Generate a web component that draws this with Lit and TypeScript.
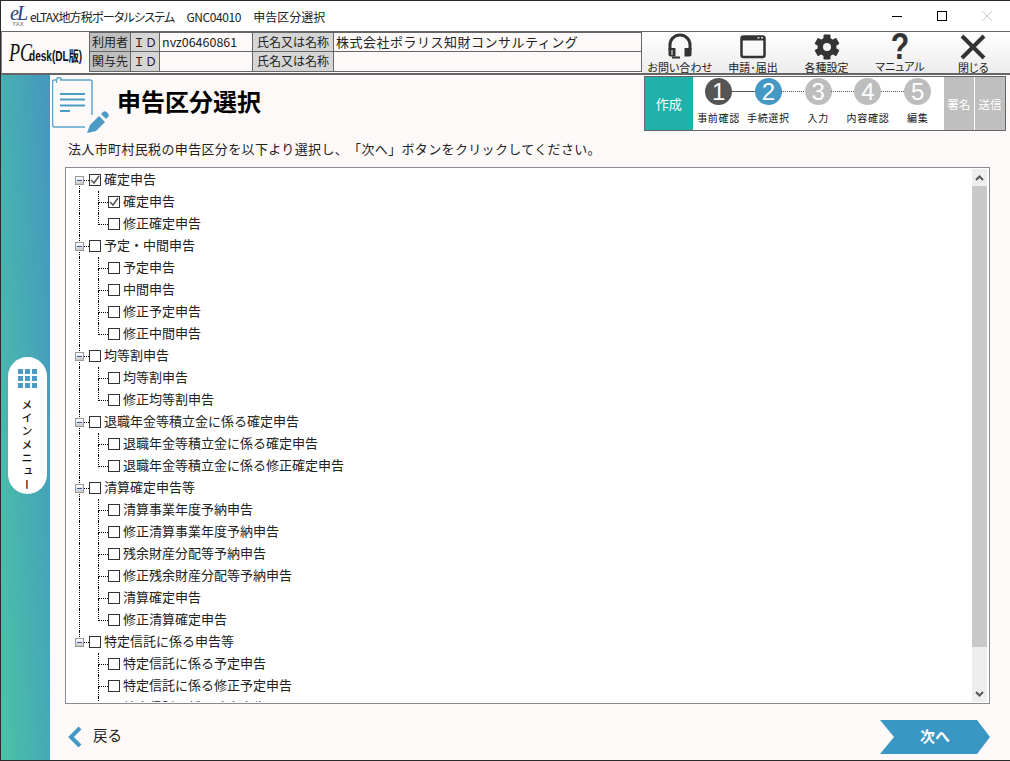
import { LitElement, css, html, svg } from 'lit';
import { customElement } from 'lit/decorators.js';

type Group = { label: string; checked?: boolean; children: { label: string; checked?: boolean }[] };

const groups: Group[] = [
  { label: '確定申告', checked: true, children: [{ label: '確定申告', checked: true }, { label: '修正確定申告' }] },
  { label: '予定・中間申告', children: [{ label: '予定申告' }, { label: '中間申告' }, { label: '修正予定申告' }, { label: '修正中間申告' }] },
  { label: '均等割申告', children: [{ label: '均等割申告' }, { label: '修正均等割申告' }] },
  { label: '退職年金等積立金に係る確定申告', children: [{ label: '退職年金等積立金に係る確定申告' }, { label: '退職年金等積立金に係る修正確定申告' }] },
  {
    label: '清算確定申告等',
    children: [
      { label: '清算事業年度予納申告' },
      { label: '修正清算事業年度予納申告' },
      { label: '残余財産分配等予納申告' },
      { label: '修正残余財産分配等予納申告' },
      { label: '清算確定申告' },
      { label: '修正清算確定申告' },
    ],
  },
  { label: '特定信託に係る申告等', children: [{ label: '特定信託に係る予定申告' }, { label: '特定信託に係る修正予定申告' }, { label: '特定信託に係る確定申告' }] },
];

const steps = [
  { n: '1', label: '事前確認', state: 'done' },
  { n: '2', label: '手続選択', state: 'current' },
  { n: '3', label: '入力', state: 'todo' },
  { n: '4', label: '内容確認', state: 'todo' },
  { n: '5', label: '編集', state: 'todo' },
];

const headset = svg`<svg width="28" height="28" viewBox="0 0 28 28"><path d="M4 17V12a10 10 0 0 1 20 0v5" fill="none" stroke="#333" stroke-width="3"/><path d="M2.500 15h7v8.500h-5a2 2 0 0 1-2-2zM25.500 15h-7v8.500h5a2 2 0 0 0 2-2z" fill="#333"/><path d="M6 24.500h8" stroke="#333" stroke-width="2" fill="none"/><path d="M6 17v5" stroke="#fdf9f8" stroke-width="1" fill="none"/></svg>`;
const windowIcon = svg`<svg width="28" height="28" viewBox="0 0 28 28"><rect x="2.500" y="3.500" width="23" height="20.500" rx="2" fill="none" stroke="#333" stroke-width="2.500"/><path d="M2 3h24v4.500H2z" fill="#333"/><path d="M18.500 4h2v1.500h-2zM22 4h2v1.500h-2z" fill="#ddd"/></svg>`;
const gear = svg`<svg width="28" height="28" viewBox="0 0 28 28"><g fill="#333" transform="translate(14 14)">
  <rect x="-3.500" y="-12.500" width="7" height="25" rx="1"/>
  <rect x="-3.500" y="-12.500" width="7" height="25" rx="1" transform="rotate(60)"/>
  <rect x="-3.500" y="-12.500" width="7" height="25" rx="1" transform="rotate(120)"/>
  <circle r="9.500"/></g><circle cx="14" cy="14" r="4" fill="#f4f4f4"/></svg>`;
const closeIcon = svg`<svg width="28" height="28" viewBox="0 0 28 28"><path d="M3 3l22 22M25 3L3 25" stroke="#333" stroke-width="4" fill="none"/></svg>`;

@customElement('app-root')
export class AppRoot extends LitElement {
  static styles = css`
    :host {
      display: block;
      width: 1010px;
      height: 761px;
      font-family: 'Noto Sans CJK JP', 'Noto Sans', sans-serif;
      color: #222;
      text-spacing-trim: space-all;
    }
    .window {
      box-sizing: border-box;
      width: 1010px;
      height: 761px;
      display: flex;
      flex-direction: column;
      border: 1px solid #2a2a2a;
      border-right: none;
      background: #fdf9f8;
      overflow: hidden;
    }

    /* title bar */
    .titlebar {
      height: 30px;
      flex: none;
      display: flex;
      align-items: center;
      background: #fff;
      font-size: 12px;
    }
    .applogo {
      width: 20px;
      margin-left: 7px;
      margin-right: 2px;
      height: 22px;
      display: flex;
      flex-direction: column;
      align-items: center;
      font-family: 'Liberation Serif', serif;
      font-style: italic;
      font-size: 20px;
      letter-spacing: -2px;
      line-height: 16px;
      color: #25407e;
    }
    .applogo small {
      font-size: 6px;
      letter-spacing: 0;
      line-height: 6px;
      font-style: normal;
      font-weight: bold;
      font-family: 'Liberation Sans', sans-serif;
      color: #999;
    }
    .apptitle {
      white-space: pre;
      flex: 1;
      display: flex;
      gap: 12px;
    }
    .apptitle span:first-child {
      font-feature-settings: 'palt';
      letter-spacing: -0.800px;
    }
    .apptitle span:nth-child(2) {
      letter-spacing: -0.400px;
    }
    .winbtn {
      width: 45px;
      height: 30px;
      display: flex;
      align-items: center;
      justify-content: center;
    }
    .winbtn:last-child {
      margin-right: 1px;
    }

    /* header */
    .header {
      height: 41px;
      flex: none;
      display: flex;
      background: #fdf9f8;
      border-top: 1px solid #666;
      border-bottom: 2px solid #666;
      border-left: 1px solid #888;
    }
    .pclogo {
      width: 87px;
      flex: none;
      display: flex;
      align-items: center;
      padding-left: 7px;
      box-sizing: border-box;
      color: #111;
    }
    .pclogo .pc {
      font-family: 'Liberation Serif', serif;
      font-style: italic;
      font-size: 25px;
      transform: scaleX(0.72);
      transform-origin: left;
      width: 20px;
      flex: none;
    }
    .pclogo .desk {
      font-family: 'Liberation Sans', 'Noto Sans CJK JP', sans-serif;
      font-weight: bold;
      font-size: 14px;
      white-space: nowrap;
      transform: scaleX(0.72);
      transform-origin: left;
      margin-top: 4px;
    }
    .userinfo {
      width: 553px;
      height: 40px;
      flex: none;
      display: grid;
      grid-template-columns: 41px 29px 93px 81px 1fr;
      grid-template-rows: 1fr 1fr;
      box-sizing: border-box;
      border: 1px solid #666;
      font-size: 12px;
      line-height: 18px;
    }
    .userinfo > div {
      border-right: 1px solid #666;
      border-bottom: 1px solid #666;
      padding: 0 2px;
      white-space: nowrap;
      overflow: hidden;
    }
    .userinfo > div:nth-child(5n) {
      border-right: none;
    }
    .userinfo > div:nth-child(n + 6) {
      border-bottom: none;
    }
    .userinfo .dark {
      background: #bfbfbf;
      text-align: center;
    }
    .userinfo .mid {
      background: #d6d6d6;
      text-align: center;
    }
    .userinfo .uid {
      font-size: 12.500px;
    }
    .userinfo .org {
      font-size: 13px;
      letter-spacing: 0.500px;
    }
    .tools {
      flex: 1;
      display: flex;
      padding-left: 1px;
      background: linear-gradient(#fff, #ececec);
    }
    .tool {
      flex: 1;
      display: flex;
      flex-direction: column;
      align-items: center;
      font-size: 11px;
      line-height: 13px;
      color: #222;
      font-feature-settings: 'palt';
    }
    .tool .ic {
      height: 28px;
      margin-bottom: 1px;
      display: flex;
      align-items: center;
      justify-content: center;
      margin-top: 1px;
    }
    .tool .q {
      font-family: 'Liberation Sans', sans-serif;
      font-weight: bold;
      font-size: 36px;
      line-height: 26px;
      color: #333;
      transform: scaleX(0.84);
    }
    .tool .lbl {
      margin-top: -1px;
    }

    /* body */
    .body {
      flex: 1;
      min-height: 0;
      display: flex;
    }
    .band {
      width: 49px;
      flex: none;
      display: flex;
      align-items: center;
      justify-content: center;
      background: linear-gradient(87deg, #49c3a6, #4596c0);
    }
    .menu {
      box-sizing: border-box;
      width: 39px;
      height: 137px;
      margin-left: 3px;
      margin-top: 15px;
      border-radius: 20px;
      background: #fff;
      display: flex;
      flex-direction: column;
      align-items: center;
      padding-top: 12px;
    }
    .dots {
      display: grid;
      grid-template-columns: repeat(3, 5px);
      grid-auto-rows: 5px;
      gap: 2px;
    }
    .dots i {
      background: #4a9cc4;
    }
    .menu span {
      margin-top: 11px;
      writing-mode: vertical-rl;
      font-size: 11px;
      letter-spacing: 2.400px;
      font-weight: 500;
      color: #111;
    }
    .main {
      flex: 1;
      min-width: 0;
      display: flex;
      flex-direction: column;
    }
    .head {
      height: 59px;
      flex: none;
      display: flex;
    }
    .pageicon {
      margin: 2px 0 0 2px;
      width: 60px;
      height: 57px;
      flex: none;
    }
    .head h1 {
      margin: 8px 0 0 5px;
      font-size: 24px;
      line-height: 36px;
      font-weight: 700;
      color: #000;
      flex: 1;
    }
    .stepper {
      box-sizing: border-box;
      margin: 1px 4px 0 0;
      width: 362px;
      height: 55px;
      flex: none;
      display: flex;
      background: #fff;
      border: 1px solid #666;
      color: #fff;
      font-size: 11.500px;
    }
    .phase {
      display: flex;
      align-items: center;
      justify-content: center;
      background: #bfbfbf;
      width: 31px;
      border-left: 1px solid #fff;
    }
    .phase.active {
      background: #20b2aa;
      width: 49px;
      border-left: none;
      font-size: 13px;
    }
    .steps {
      flex: 1;
      display: flex;
      padding-left: 1px;
    }
    .step {
      width: 49.800px;
      display: flex;
      flex-direction: column;
      align-items: center;
      position: relative;
      color: #111;
      font-size: 10px;
      padding-top: 1px;
    }
    .num {
      width: 27px;
      height: 27px;
      border-radius: 50%;
      display: flex;
      align-items: center;
      justify-content: center;
      color: #fff;
      font-family: 'Liberation Sans', sans-serif;
      font-size: 24px;
      background: #bdbdbd;
    }
    .done .num {
      background: #555;
    }
    .current .num {
      background: #4398c4;
    }
    .step b {
      font-weight: 400;
      letter-spacing: 0.700px;
      line-height: 14px;
      margin-top: 6px;
      white-space: nowrap;
    }
    .link {
      position: absolute;
      left: 38px;
      top: 14px;
      width: 23px;
      border-top: 1px dotted #555;
    }
    .done .link {
      border-top: 1px solid #555;
    }
    .desc {
      margin: 5px 0 0 18px;
      height: 20px;
      font-size: 13px;
      line-height: 20px;
      letter-spacing: 0.350px;
      flex: none;
    }
    .box {
      margin: 8px 0 0 15px;
      width: 925px;
      height: 537px;
      box-sizing: border-box;
      flex: none;
      display: flex;
      background: #fff;
      border: 1px solid #8a8a94;
      padding: 1px 1px 1px 0;
    }
    .tree {
      flex: 1;
      min-width: 0;
      overflow: hidden;
    }
    .row {
      height: 22px;
      display: flex;
      align-items: center;
      padding-left: 13px;
      font-size: 13px;
      position: relative;
      white-space: nowrap;
    }
    .row .text {
      margin-bottom: 4px;
    }
    .guide {
      width: 19px;
      height: 22px;
      flex: none;
      box-sizing: border-box;
    }
    .guide.line {
      border-left: 1px dotted #000;
    }
    .elbow {
      width: 10px;
      height: 22px;
      flex: none;
      display: flex;
      flex-direction: column;
    }
    .elbow i {
      display: block;
      box-sizing: border-box;
    }
    .elbow .up {
      height: 12px;
      border-left: 1px dotted #000;
      border-bottom: 1px dotted #000;
    }
    .elbow .down {
      height: 10px;
    }
    .elbow .down.line {
      border-left: 1px dotted #000;
    }
    .elbow .up.root {
      border-left: none;
    }
    .expander {
      position: absolute;
      left: 9px;
      top: 7px;
      box-sizing: border-box;
      width: 9px;
      height: 9px;
      background: linear-gradient(#fff, #c8c8c8);
      border: 1px solid #999;
      display: flex;
      align-items: center;
      justify-content: center;
    }
    .expander::after {
      content: '';
      width: 5px;
      height: 1px;
      background: #3a5aa8;
    }
    .check {
      box-sizing: border-box;
      width: 12px;
      height: 12px;
      flex: none;
      margin-right: 3px;
      border: 1px solid #333;
      background: #fff;
      display: flex;
    }
    .scrollbar {
      width: 15px;
      flex: none;
      margin-right: 1px;
      background: #eee;
      display: flex;
      flex-direction: column;
    }
    .scrollbar .arrow {
      height: 17px;
      display: flex;
      align-items: center;
      justify-content: center;
      flex: none;
    }
    .scrollbar .thumb {
      height: 461px;
      background: #c8c8c8;
      flex: none;
    }
    .scrollbar .rest {
      flex: 1;
    }
    .foot {
      flex: 1;
      display: flex;
      align-items: center;
      justify-content: space-between;
      padding: 10px 20px 0 17px;
    }
    .back {
      display: flex;
      align-items: center;
      gap: 10px;
      font-size: 14.500px;
    }
    .back span {
      margin-bottom: 5px;
    }
    .next {
      width: 110px;
      height: 34px;
      background: #3a97c4;
      clip-path: polygon(0 0, 97px 0, 110px 17px, 97px 34px, 0 34px, 14px 17px);
      color: #fff;
      font-size: 15px;
      font-weight: 700;
      display: flex;
      align-items: center;
      justify-content: center;
      padding-bottom: 3px;
      box-sizing: border-box;
    }
  `;

  private check(checked?: boolean) {
    return html`<span class="check">${checked
      ? html`<svg width="10" height="10" viewBox="0 0 10 10"><path d="M1 5l3 3 5-7" fill="none" stroke="#555" stroke-width="1.500"/></svg>`
      : ''}</span>`;
  }

  private renderGroup(group: Group, index: number) {
    const lastGroup = index === groups.length - 1;
    return html`
      <div class="row">
        <span class="elbow">
          <i class="up ${index === 0 ? 'root' : ''}"></i>
          <i class="down ${lastGroup ? '' : 'line'}"></i>
        </span>
        <span class="expander"></span>
        ${this.check(group.checked)}
        <span class="text">${group.label}</span>
      </div>
      ${group.children.map(
        (child, i) => html`
          <div class="row">
            <span class="guide ${lastGroup ? '' : 'line'}"></span>
            <span class="elbow">
              <i class="up"></i>
              <i class="down ${i === group.children.length - 1 ? '' : 'line'}"></i>
            </span>
            ${this.check(child.checked)}
            <span class="text">${child.label}</span>
          </div>
        `,
      )}
    `;
  }

  render() {
    return html`
      <div class="window">
        <div class="titlebar">
          <div class="applogo">eL<small>TAX</small></div>
          <div class="apptitle"><span>eLTAX地方税ポータルシステム</span><span>GNC04010</span><span>申告区分選択</span></div>
          <div class="winbtn"><svg width="10" height="10"><path d="M0 5.500h10" stroke="#000"/></svg></div>
          <div class="winbtn"><svg width="10" height="10"><rect x=".5" y=".5" width="9" height="9" fill="none" stroke="#000"/></svg></div>
          <div class="winbtn"><svg width="10" height="10"><path d="M0 0l10 10M10 0L0 10" stroke="#ccc"/></svg></div>
        </div>

        <div class="header">
          <div class="pclogo"><span class="pc">PC</span><span class="desk">desk(DL版)</span></div>
          <div class="userinfo">
            <div class="dark">利用者</div>
            <div class="mid">ＩＤ</div>
            <div class="uid">nvz06460861</div>
            <div class="mid">氏名又は名称</div>
            <div class="org">株式会社ポラリス知財コンサルティング</div>
            <div class="dark">関与先</div>
            <div class="mid">ＩＤ</div>
            <div></div>
            <div class="mid">氏名又は名称</div>
            <div></div>
          </div>
          <div class="tools">
            <div class="tool"><div class="ic">${headset}</div><span class="lbl">お問い合わせ</span></div>
            <div class="tool"><div class="ic">${windowIcon}</div><span class="lbl">申請･届出</span></div>
            <div class="tool"><div class="ic">${gear}</div><span class="lbl">各種設定</span></div>
            <div class="tool"><div class="ic q">?</div><span class="lbl">マニュアル</span></div>
            <div class="tool"><div class="ic">${closeIcon}</div><span class="lbl">閉じる</span></div>
          </div>
        </div>

        <div class="body">
          <div class="band">
            <div class="menu">
              <div class="dots">${Array.from({ length: 9 }, () => html`<i></i>`)}</div>
              <span>メインメニュー</span>
            </div>
          </div>
          <div class="main">
            <div class="head">
              <svg class="pageicon" viewBox="0 0 60 57">
                <path d="M8 3h30a2 2 0 0 1 2 2v33M33 50H2.500a2 2 0 0 1-2-2V5a2 2 0 0 1 2-2H5" fill="none" stroke="#5ba7cb" stroke-width="1.500"/>
                <path d="M4.500 6V3a2.500 2.500 0 0 1 5 0" fill="none" stroke="#5ba7cb" stroke-width="1.300"/>
                <path d="M8 17h25M8 22.500h25M8 28.500h25M8 34h10" stroke="#4a9cc4" stroke-width="1.800" fill="none"/>
                <g transform="translate(1 0)" fill="#4a9cc4">
                  <path d="M34 56l3-8 9-9 6 6-9 9z"/>
                  <path d="M48 37l2-2a2.500 2.500 0 0 1 3.500 0l1.500 1.500a2.500 2.500 0 0 1 0 3.500l-2 2z"/>
                </g>
              </svg>
              <h1>申告区分選択</h1>
              <div class="stepper">
                <div class="phase active">作成</div>
                <div class="steps">
                  ${steps.map(
                    (s, i) => html`
                      <div class="step ${s.state}">
                        <div class="num">${s.n}</div>
                        <b>${s.label}</b>
                        ${i < steps.length - 1 ? html`<span class="link"></span>` : ''}
                      </div>
                    `,
                  )}
                </div>
                <div class="phase">署名</div>
                <div class="phase">送信</div>
              </div>
            </div>
            <div class="desc">法人市町村民税の申告区分を以下より選択し、「次へ」ボタンをクリックしてください。</div>
            <div class="box">
              <div class="tree">${groups.map((g, i) => this.renderGroup(g, i))}</div>
              <div class="scrollbar">
                <div class="arrow"><svg width="9" height="6"><path d="M1 5l3.500-3.500L8 5" fill="none" stroke="#555" stroke-width="2"/></svg></div>
                <div class="thumb"></div>
                <div class="rest"></div>
                <div class="arrow"><svg width="9" height="6"><path d="M1 1l3.500 3.500L8 1" fill="none" stroke="#555" stroke-width="2"/></svg></div>
              </div>
            </div>
            <div class="foot">
              <div class="back">
                <svg width="16" height="22" viewBox="0 0 16 22"><path d="M13 2L4 11l9 9" fill="none" stroke="#4398c4" stroke-width="4"/></svg>
                <span>戻る</span>
              </div>
              <div class="next">次へ</div>
            </div>
          </div>
        </div>
      </div>
    `;
  }
}
